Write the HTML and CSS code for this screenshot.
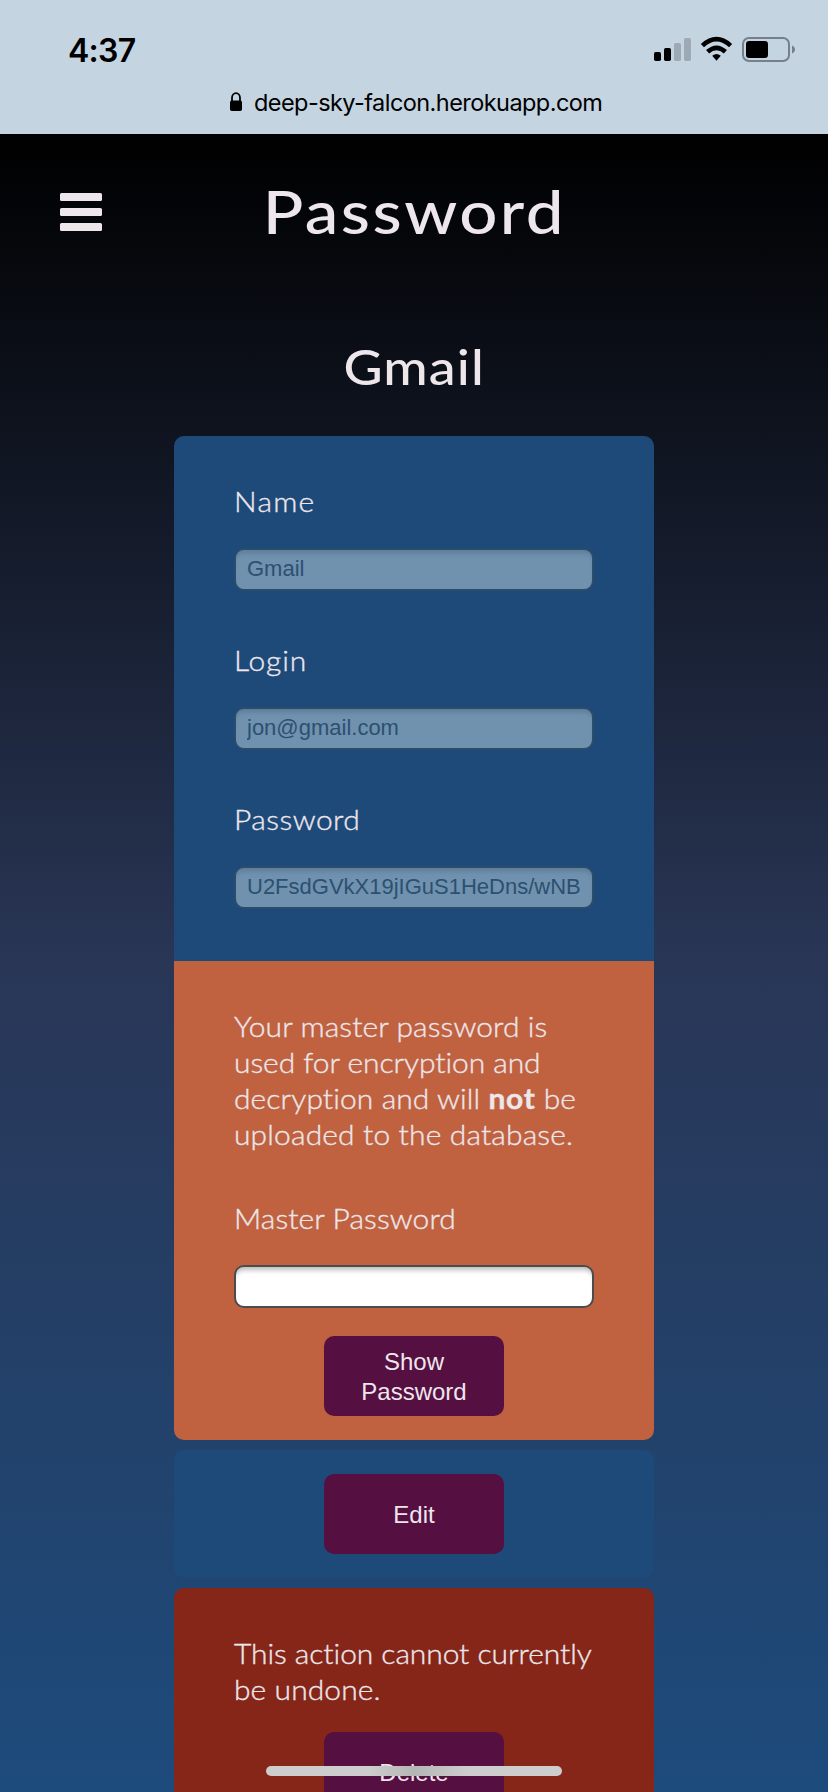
FILE: index.html
```html
<!DOCTYPE html>
<html lang="en">
<head>
<meta charset="utf-8">
<title>Password</title>
<link rel="stylesheet" href="styles.css">
</head>
<body>
<header class="browser-bar">
  <div class="status">
    <span class="time">4:37</span>
    <svg class="status-icons" width="144" height="28" viewBox="0 0 144 28">
      <rect x="1" y="16" width="7" height="9" rx="1.7"/>
      <rect x="11" y="12" width="7" height="13" rx="1.7"/>
      <rect x="21" y="7" width="7" height="18" rx="1.7" fill="#9da9b5"/>
      <rect x="31" y="2" width="7" height="23" rx="1.7" fill="#9da9b5"/>
      <g fill="none" stroke="#000" stroke-width="4.6">
        <path d="M49.4 9.6Q63.5-3.2 77.6 9.6"/>
        <path d="M54.6 15.8Q63.5 7.8 72.4 15.8"/>
      </g>
      <path d="M59.2 19.7Q63.5 16.2 67.8 19.7L63.5 24.7Z"/>
      <rect x="90" y="2" width="46" height="23" rx="6" fill="none" stroke="#75808b" stroke-width="2"/>
      <rect x="93" y="5" width="22" height="17" rx="3.2"/>
      <path d="M139 9.5C143 11 143 16 139 17.5Z" fill="#75808b"/>
    </svg>
  </div>
  <div class="address">
    <svg class="lock" width="14" height="20" viewBox="0 0 14 20"><path d="M3 9V6a4 4.8 0 0 1 8 0v3" fill="none" stroke="#000" stroke-width="1.8"/><rect x="1" y="8.5" width="12" height="10.5" rx="1.7"/></svg>
    <span class="url">deep-sky-falcon.herokuapp.com</span>
  </div>
</header>
<main class="page">
  <div class="topbar">
    <button class="menu" aria-label="Menu"><i></i><i></i><i></i></button>
    <h1 class="title"><span>Password</span></h1>
  </div>
  <h2 class="entry"><span>Gmail</span></h2>
  <div class="cards">
    <form class="card">
      <section class="details">
        <label class="field"><span class="label label-name">Name</span><input class="input" disabled value="Gmail"></label>
        <label class="field"><span class="label label-login">Login</span><input class="input" disabled value="jon@gmail.com"></label>
        <label class="field"><span class="label label-password">Password</span><input class="input" disabled value="U2FsdGVkX19jIGuS1HeDns/wNB"></label>
      </section>
      <section class="master">
        <p class="copy">Your master password is<br><span class="tight">used for encryption and</span><br>decryption and will <b>not</b> be<br><span class="loose">uploaded to the database.</span></p>
        <label class="field"><span class="label">Master Password</span><input class="input" type="password"></label>
        <button class="btn" type="button">Show<br>Password</button>
      </section>
    </form>
    <div class="card edit"><button class="btn">Edit</button></div>
    <div class="card danger">
      <p class="copy"><span class="tight">This action cannot currently</span><br>be undone.</p>
      <button class="btn">Delete</button>
    </div>
  </div>
</main>
<div class="home"></div>
</body>
</html>
```
FILE: styles.css
```css
* { box-sizing: border-box; }
body {
  margin: 0;
  height: 1792px;
  overflow: hidden;
  position: relative;
  color: #ede6eb;
  font-family: Lato, sans-serif;
  font-weight: 300;
}
.browser-bar {
  height: 134px;
  background: #c5d4e1;
  color: #000;
  font-family: Inter, sans-serif;
}
.status {
  display: flex;
  justify-content: space-between;
  padding: 31px 31px 0 68px;
  height: 86px;
}
.time {
  font-size: 32px;
  font-weight: 600;
  line-height: 40px;
  letter-spacing: -0.7px;
}
.status-icons { margin-top: 5px; }
.address {
  display: flex;
  align-items: center;
  gap: 11px;
  padding-left: 229px;
  height: 32px;
}
.url { font-size: 23.5px; font-weight: 400; letter-spacing: -0.56px; }
.page {
  height: 1658px;
  background: linear-gradient(#000, #293656 50%, #1d4b7c);
}
.topbar {
  position: relative;
  padding-top: 37px;
}
.menu {
  position: absolute;
  left: 60px;
  top: 59px;
  display: grid;
  gap: 7px;
  padding: 0;
  border: 0;
  background: none;
}
.menu i {
  width: 42px;
  height: 8px;
  border-radius: 1.5px;
  background: #ede6eb;
}
.title, .entry {
  margin: 0;
  text-align: center;
  font-weight: 500;
}
.title span, .entry span { display: inline-block; transform: scaleX(1.12); }
.title { font-size: 60px; line-height: 80px; letter-spacing: 2.2px; }
.entry { font-size: 48px; line-height: 60px; padding-top: 86px; letter-spacing: 1px; }
.cards {
  width: 480px;
  margin: 39px auto 0;
  display: grid;
  gap: 10px;
}
.card { border-radius: 10px; overflow: hidden; }
.details { height: 525px; padding: 47px 60px 0; background: #1e4a7a; }
.field { display: block; height: 159px; }
.label, .copy {
  font-size: 28px;
  line-height: 36px;
  letter-spacing: 0.1px;
  font-variant-ligatures: none;
  transform: scaleX(1.07);
  transform-origin: left;
  -webkit-text-stroke: 0.35px #ede6eb;
}
.label { display: inline-block; }
.label-name { letter-spacing: 1.2px; }
.label-login { letter-spacing: 0.8px; }
.label-password { letter-spacing: 0.45px; }
.input {
  display: block;
  width: 360px;
  height: 43px;
  margin-top: 29px;
  padding: 0 11px 2px;
  border: 2px solid #4c4c4c;
  border-radius: 10px;
  background: #fff;
  box-shadow: inset 0 6px 5px -3px #bbb;
  font: 22px "Liberation Sans", sans-serif;
}
.input:disabled {
  border-color: #2c4c6c;
  background: #7092af;
  color: #2c5071;
  box-shadow: inset 0 6px 5px -3px #5d7c98;
}
.master { height: 479px; padding: 47px 60px 0; background: #c06240; }
.copy { margin: 0; white-space: nowrap; }
.tight { letter-spacing: -0.05px; }
.loose { letter-spacing: 0.15px; }
.copy b { font-weight: 700; letter-spacing: 0.6px; }
.master .field { margin-top: 48px; height: 136px; }
.btn {
  display: block;
  width: 180px;
  height: 80px;
  margin: 0 auto;
  padding: 2px 0 0;
  border: 0;
  border-radius: 10px;
  background: #560f41;
  color: #ede6eb;
  font: 24px/30px "Liberation Sans", sans-serif;
}
.edit { height: 128px; padding-top: 24px; background: #1e4a7a; }
.danger { height: 204px; padding: 47px 60px 0; border-radius: 10px 10px 0 0; background: #852619; }
.danger .btn { margin-top: 25px; }
.home {
  position: absolute;
  left: 266px;
  top: 1766px;
  width: 296px;
  height: 10px;
  border-radius: 5px;
  background: linear-gradient(90deg, #cdcdcd 35%, #b5b5b5 50%, #cdcdcd 68%);
}
```
